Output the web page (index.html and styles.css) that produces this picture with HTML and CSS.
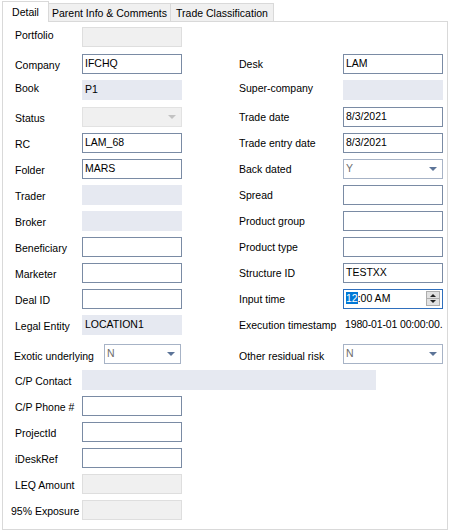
FILE: index.html
```html
<!DOCTYPE html>
<html>
<head>
<meta charset="utf-8">
<link rel="stylesheet" href="styles.css">
</head>
<body>
<div class="tabs">
  <div class="tab active">Detail</div>
  <div class="tab w2">Parent Info &amp; Comments</div>
  <div class="tab w3">Trade Classification</div>
</div>
<div class="panel">
  <div class="form">
    <div class="ll up">Portfolio</div><div class="f dis"></div>

    <div class="ll g1">Company</div><div class="f g1">IFCHQ</div>
    <div class="rl g1">Desk</div><div class="rf f g1">LAM</div>

    <div class="ll up">Book</div><div class="f ro">P1</div>
    <div class="rl up">Super-company</div><div class="rf f ro"></div>

    <div class="ll g1">Status</div><div class="f cb cbdis g1"></div>
    <div class="rl g1">Trade date</div><div class="rf f g1">8/3/2021</div>

    <div class="ll">RC</div><div class="f">LAM_68</div>
    <div class="rl">Trade entry date</div><div class="rf f">8/3/2021</div>

    <div class="ll">Folder</div><div class="f">MARS</div>
    <div class="rl">Back dated</div><div class="rf f cb">Y</div>

    <div class="ll">Trader</div><div class="f ro"></div>
    <div class="rl">Spread</div><div class="rf f"></div>

    <div class="ll">Broker</div><div class="f ro"></div>
    <div class="rl">Product group</div><div class="rf f"></div>

    <div class="ll">Beneficiary</div><div class="f"></div>
    <div class="rl">Product type</div><div class="rf f"></div>

    <div class="ll">Marketer</div><div class="f"></div>
    <div class="rl">Structure ID</div><div class="rf f">TESTXX</div>

    <div class="ll">Deal ID</div><div class="f"></div>
    <div class="rl">Input time</div>
    <div class="rf f spin"><span class="sel">12</span>:00 AM<span class="spinbtn"><i class="up"></i><i class="dn"></i></span></div>

    <div class="ll">Legal Entity</div><div class="f ro">LOCATION1</div>
    <div class="rl">Execution timestamp</div><div class="rf f plain">1980-01-01 00:00:00.</div>

    <div class="exo gap"><span class="exl">Exotic underlying</span><div class="f cb exocb">N</div></div>
    <div class="rl gap lower">Other residual risk</div><div class="rf f cb gap">N</div>

    <div class="ll">C/P Contact</div><div class="f ro wide"></div>

    <div class="ll">C/P Phone #</div><div class="f"></div>

    <div class="ll">ProjectId</div><div class="f"></div>

    <div class="ll">iDeskRef</div><div class="f"></div>

    <div class="ll">LEQ Amount</div><div class="f dis"></div>

    <div class="ll shift">95% Exposure</div><div class="f dis"></div>
  </div>
</div>
</body>
</html>
```

FILE: styles.css
```css
html, body {
  margin: 0;
  background: #fff;
}
body {
  font-family: "Liberation Sans", Arial, sans-serif;
  font-size: 10.5px;
  color: #000;
  width: 450px;
  height: 532px;
  overflow: hidden;
}
.tabs {
  display: flex;
  align-items: flex-end;
  height: 21px;
  padding-left: 2px;
  position: relative;
  z-index: 2;
}
.tab {
  box-sizing: border-box;
  height: 18px;
  line-height: 18px;
  border: 1px solid #d9d9d9;
  border-bottom: none;
  background: #f0f0f0;
  text-align: center;
  margin-left: -1px;
  white-space: nowrap;
}
.tab.active {
  width: 47px;
  height: 21px;
  margin-left: 0;
  margin-bottom: -1px;
  background: #fff;
  line-height: 20px;
  position: relative;
  z-index: 3;
}
.tab.w2 { width: 123px; }
.tab.w3 { width: 104px; }

.panel {
  box-sizing: border-box;
  margin-left: 2px;
  width: 446px;
  height: 509px;
  border: 1px solid #d9d9d9;
  padding: 5px 0 0 12px;
  background: #fff;
}
.form {
  display: grid;
  grid-template-columns: 67px 100px 57px 104px 100px;
  row-gap: 6px;
}
.ll {
  grid-column: 1;
  height: 20px;
  line-height: 22px;
  white-space: nowrap;
}
.shift { margin-left: -4px; }
.rl {
  grid-column: 4;
  height: 20px;
  line-height: 21px;
  white-space: nowrap;
}
.ll.up, .rl.up { line-height: 17px; }
.rf { grid-column: 5; }
.g1 { margin-top: 1px; }

.f {
  box-sizing: border-box;
  height: 20px;
  border: 1px solid #7a8ba4;
  background: #fff;
  padding-left: 2px;
  line-height: 17px;
  white-space: nowrap;
  overflow: hidden;
  position: relative;
}
.ro {
  background: #e6e9f1;
  border-color: #e6e9f1;
}
.dis {
  background: #f0f0f0;
  border-color: #dedede;
}
.plain {
  border-color: #fff;
  padding-left: 1px;
  overflow: visible;
  letter-spacing: -0.15px;
}
.cb {
  border-color: #a7b3c6;
  color: #6d6d6d;
}
.cb::after {
  content: "";
  position: absolute;
  right: 5px;
  top: 7px;
  border-left: 4px solid transparent;
  border-right: 4px solid transparent;
  border-top: 4px solid #5c7498;
}
.cbdis {
  background: #f0f0f0;
  border-color: #e2e2e2;
}
.cbdis::after {
  border-top-color: #c2c2c2;
}
.gap { margin-top: 3px; }
.lower { line-height: 24px; }
.exo {
  grid-column: 1 / span 2;
  display: flex;
  align-items: center;
  height: 20px;
  margin-left: -1px;
}
.exl {
  white-space: nowrap;
  line-height: 24px;
  height: 20px;
}
.exocb {
  width: 77px;
  margin-left: auto;
  margin-right: 1px;
}
.wide {
  grid-column: 2 / span 4;
  width: 294px;
}
.spin {
  border-color: #2f6fbd;
}
.sel {
  background: #0078d7;
  color: #fff;
}
.spinbtn {
  position: absolute;
  right: 2px;
  top: 1px;
  width: 14px;
  height: 15px;
  box-sizing: border-box;
  border: 1px solid #adadad;
  background: #e1e1e1;
}
.spinbtn::after {
  content: "";
  position: absolute;
  left: 0;
  right: 0;
  top: 6px;
  border-top: 1px solid #adadad;
}
.spinbtn i {
  position: absolute;
  left: 3px;
  width: 0;
  height: 0;
  border-left: 3px solid transparent;
  border-right: 3px solid transparent;
}
.spinbtn .up {
  top: 2px;
  border-bottom: 3px solid #222;
}
.spinbtn .dn {
  top: 8px;
  border-top: 3px solid #222;
}
```
